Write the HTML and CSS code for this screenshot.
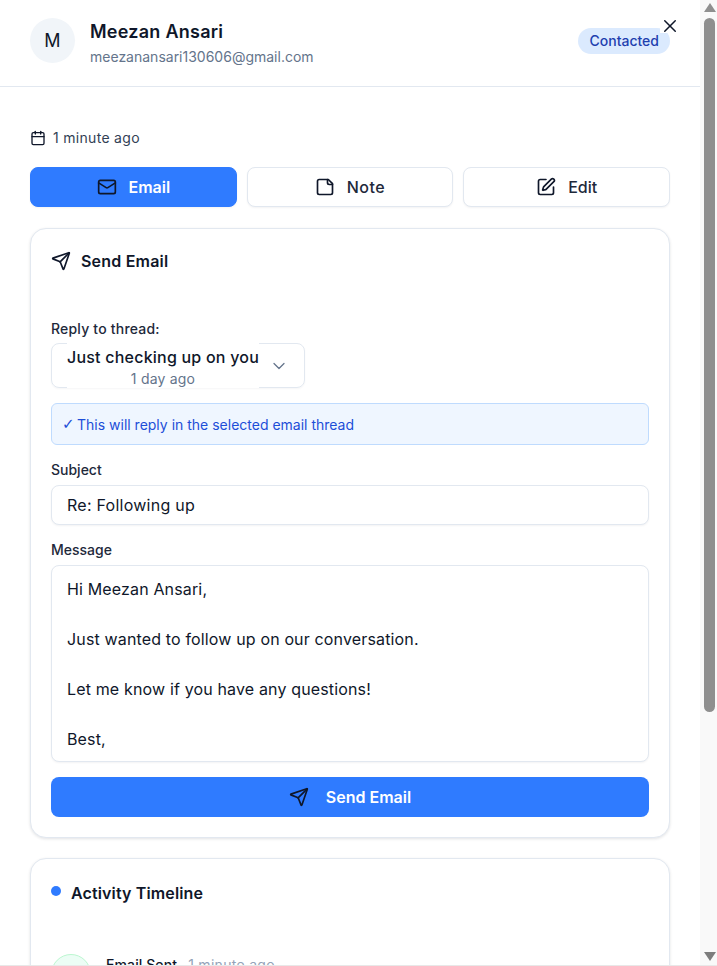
FILE: index.html
```html
<!DOCTYPE html>
<html>
<head>
    <title>Lead details</title>
    <link rel="stylesheet" href="styles.css">
</head>
<body>
    <div class="window">
        <div class="panel">
            <button class="close" aria-label="Close">
                <svg width="14" height="14" viewBox="4 4 16 16" class="icon"><path d="M18 6 6 18"/><path d="m6 6 12 12"/></svg>
            </button>

            <header class="header">
                <div class="avatar">M</div>
                <div class="who">
                    <h1>Meezan Ansari</h1>
                    <p>meezanansari130606@gmail.com</p>
                </div>
                <span class="badge">Contacted</span>
            </header>

            <main class="content">
                <div class="when">
                    <svg width="16" height="16" viewBox="0 0 24 24" class="icon"><path d="M8 2v4"/><path d="M16 2v4"/><rect width="18" height="18" x="3" y="4" rx="2"/><path d="M3 10h18"/></svg>
                    1 minute ago
                </div>

                <div class="tabs">
                    <button class="tab active">
                        <svg width="20" height="20" viewBox="0 0 24 24" class="icon"><rect width="20" height="16" x="2" y="4" rx="2"/><path d="m22 7-8.97 5.7a1.94 1.94 0 0 1-2.06 0L2 7"/></svg>
                        Email
                    </button>
                    <button class="tab note-tab">
                        <svg width="20" height="20" viewBox="0 0 24 24" class="icon"><path d="M16 3H5a2 2 0 0 0-2 2v14a2 2 0 0 0 2 2h14a2 2 0 0 0 2-2V8Z"/><path d="M15 3v4a2 2 0 0 0 2 2h4"/></svg>
                        Note
                    </button>
                    <button class="tab">
                        <svg width="20" height="20" viewBox="0 0 24 24" class="icon"><path d="M12 3H5a2 2 0 0 0-2 2v14a2 2 0 0 0 2 2h14a2 2 0 0 0 2-2v-7"/><path d="M18.375 2.625a1 1 0 0 1 3 3l-9.013 9.014a2 2 0 0 1-.853.505l-2.873.84a.5.5 0 0 1-.62-.62l.84-2.873a2 2 0 0 1 .506-.852z"/></svg>
                        Edit
                    </button>
                </div>

                <section class="card email-card">
                    <h2 class="card-title">
                        <svg width="20" height="20" viewBox="0 0 24 24" class="icon"><path d="M14.536 21.686a.5.5 0 0 0 .937-.024l6.5-19a.496.496 0 0 0-.635-.635l-19 6.5a.5.5 0 0 0-.024.937l7.93 3.18a2 2 0 0 1 1.112 1.11z"/><path d="m21.854 2.147-10.94 10.939"/></svg>
                        Send Email
                    </h2>

                    <label class="label thread-label">Reply to thread:</label>
                    <div class="thread-select">
                        <div class="thread-text">
                            <strong>Just checking up on you</strong>
                            <span>1 day ago</span>
                        </div>
                        <svg width="20" height="20" viewBox="0 0 24 24" class="icon chevron"><path d="m6 9 6 6 6-6"/></svg>
                    </div>

                    <div class="notice"><span class="check">✓</span> This will reply in the selected email thread</div>

                    <label class="label">Subject</label>
                    <div class="field subject">Re: Following up</div>

                    <label class="label">Message</label>
                    <div class="field message">
                        <p>Hi Meezan Ansari,</p>
                        <p>Just wanted to follow up on our conversation.</p>
                        <p>Let me know if you have any questions!</p>
                        <p>Best,</p>
                    </div>

                    <button class="send">
                        <svg width="20" height="20" viewBox="0 0 24 24" class="icon"><path d="M14.536 21.686a.5.5 0 0 0 .937-.024l6.5-19a.496.496 0 0 0-.635-.635l-19 6.5a.5.5 0 0 0-.024.937l7.93 3.18a2 2 0 0 1 1.112 1.11z"/><path d="m21.854 2.147-10.94 10.939"/></svg>
                        Send Email
                    </button>
                </section>

                <section class="card timeline-card">
                    <h2 class="card-title timeline-title"><span class="dot"></span>Activity Timeline</h2>
                    <div class="event">
                        <div class="event-icon"></div>
                        <div class="event-text"><strong>Email Sent</strong> <span>1 minute ago</span></div>
                    </div>
                </section>
            </main>
        </div>

        <div class="scrollbar">
            <div class="arrow up"></div>
            <div class="thumb"></div>
            <div class="arrow down"></div>
        </div>
    </div>
</body>
</html>
```

FILE: styles.css
```css
* { box-sizing: border-box; }
html, body { margin: 0; height: 100%; overflow: hidden; }
body { font-family: Inter, "Liberation Sans", sans-serif; color: #0f172a; background: #fff; }
h1, h2, p { margin: 0; }
button { font-family: inherit; cursor: pointer; }

.window { display: flex; height: 966px; overflow: hidden; border-bottom: 1px solid #e8e8e8; }
.panel { position: relative; width: 700px; flex: none; height: 965px; overflow: hidden; background: #fff; }
.icon { fill: none; stroke: currentColor; stroke-width: 2; stroke-linecap: round; stroke-linejoin: round; flex: none; }

.close { position: absolute; top: 19px; right: 20px; width: 20px; height: 14px; padding: 0; border: none; background: #fff; color: #0f172a; display: flex; justify-content: center; }
.close .icon { stroke-width: 1.7; }

.header { display: flex; align-items: center; height: 87px; padding: 0 30px 6px; border-bottom: 1px solid #e2e8f0; }
.avatar { width: 45px; height: 45px; border-radius: 50%; background: #f1f5f9; display: flex; align-items: center; justify-content: center; font-size: 18px; }
.who { margin-left: 15px; flex: 1; padding-top: 5px; }
.who h1 { font-size: 18px; line-height: 28px; font-weight: 600; letter-spacing: 0.25px; }
.who p { font-size: 14px; line-height: 20px; margin-top: 1px; color: #64748b; }
.badge { background: #dbeafe; color: #1e40af; font-size: 14px; font-weight: 500; line-height: 20px; padding: 3px 11px; margin-top: 2px; border-radius: 13px; }

.content { padding: 41px 30px 0; }
.when { display: flex; align-items: center; gap: 7px; font-size: 14px; line-height: 20px; letter-spacing: 0.3px; color: #334155; }
.when .icon { color: #0f172a; }

.tabs { display: grid; grid-template-columns: 1fr 1fr 1fr; gap: 10px; margin-top: 19px; }
.tab { height: 40px; display: flex; align-items: center; justify-content: center; gap: 12px; font-size: 16px; font-weight: 500; color: #1e293b; background: #fff; border: 1px solid #e2e8f0; border-radius: 8px; box-shadow: 0 1px 2px rgba(15, 23, 42, 0.05); }
.tab .icon { color: #0f172a; }
.tab.active { background: #2f7bff; border-color: #2f7bff; color: #fff; font-weight: 600; }
.note-tab { letter-spacing: 0.5px; }

.card { background: #fff; border: 1px solid #e2e8f0; border-radius: 16px; padding: 20px; box-shadow: 0 1px 3px rgba(15, 23, 42, 0.12); }
.email-card { margin-top: 21px; height: 610px; }
.card-title { display: flex; align-items: center; gap: 10px; font-size: 16px; line-height: 24px; font-weight: 600; letter-spacing: 0.2px; }
.timeline-card { margin-top: 20px; height: 300px; }

.label { display: block; font-size: 14px; line-height: 20px; font-weight: 500; color: #1e293b; }
.thread-label { margin-top: 48px; line-height: 16px; letter-spacing: 0.2px; }

.thread-select { display: flex; align-items: center; width: 254px; height: 45px; margin-top: 6px; padding-right: 15px; border: 1px solid #e2e8f0; border-radius: 8px; box-shadow: 0 1px 2px rgba(15, 23, 42, 0.04); }
.thread-text { background: #fff; margin: -1px 0 -1px 15px; height: 45px; padding-top: 2px; display: flex; flex-direction: column; align-items: center; justify-content: center; white-space: nowrap; }
.thread-text strong { font-size: 16px; line-height: 24px; font-weight: 500; letter-spacing: 0.22px; }
.thread-text span { font-size: 14px; line-height: 20px; letter-spacing: 0.2px; color: #64748b; }
.chevron { color: #64748b; margin-left: auto; stroke-width: 1.5; }

.notice { margin-top: 15px; margin-bottom: 15px; height: 42px; padding: 0 10px; display: flex; align-items: center; gap: 4px; font-size: 14px; color: #1d4ed8; background: #eff6ff; border: 1px solid #bfdbfe; border-radius: 6px; }
.check { font-family: "DejaVu Sans", sans-serif; width: 11px; font-size: 15px; line-height: 20px; }

.field { margin-top: 5px; background: #fff; border: 1px solid #e2e8f0; border-radius: 8px; padding: 0 15px; font-size: 16px; box-shadow: 0 1px 2px rgba(15, 23, 42, 0.05); }
.subject { height: 40px; line-height: 38px; margin-bottom: 15px; letter-spacing: 0.25px; }
.message { height: 197px; padding-top: 11px; overflow: hidden; letter-spacing: 0.15px; }
.message p { line-height: 25px; margin-bottom: 25px; }

.send { width: 100%; height: 40px; margin-top: 15px; display: flex; align-items: center; justify-content: center; gap: 17px; font-size: 16px; font-weight: 600; color: #fff; background: #2f7bff; border: none; border-radius: 8px; }
.send .icon { color: #0f172a; }

.timeline-title { margin-top: 2px; letter-spacing: 0.13px; }
.dot { width: 10px; height: 10px; margin-bottom: 4px; border-radius: 50%; background: #2f7bff; }
.event { display: flex; gap: 15px; margin-top: 49px; }
.event-icon { width: 40px; height: 40px; border-radius: 50%; background: #ecfdf5; border: 1px solid #bbf7d0; flex: none; }
.event-text { font-size: 14px; line-height: 20px; margin-top: 1px; letter-spacing: 0.1px; }
.event-text strong { font-weight: 500; }
.event-text span { color: #94a3b8; margin-left: 7px; letter-spacing: 0.3px; }

.scrollbar { flex: 1; height: 965px; padding-left: 2px; background: #f9f9f9; display: flex; flex-direction: column; align-items: center; }
.thumb { width: 11px; height: 694px; margin-top: 6px; background: #8f8f8f; border-radius: 6px; }
.arrow { width: 0; height: 0; border-left: 6px solid transparent; border-right: 6px solid transparent; }
.arrow.up { margin-top: 3px; border-bottom: 9px solid #8f8f8f; }
.arrow.down { margin-top: auto; margin-bottom: 4px; border-top: 9px solid #7d7d7d; }
```
